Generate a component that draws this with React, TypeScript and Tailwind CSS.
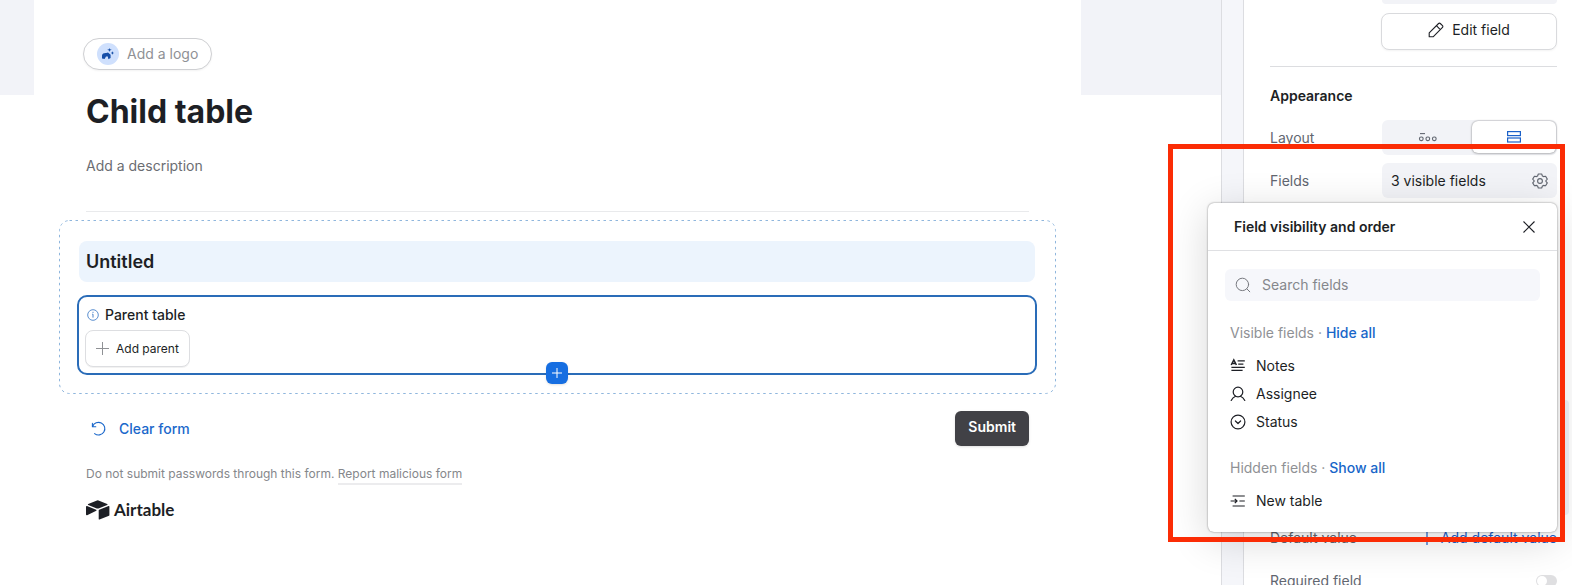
import type { ReactNode } from "react";

const field = { className: "h-4 w-4 shrink-0", viewBox: "0 0 16 16", fill: "none", stroke: "currentColor", strokeWidth: 1.2 };

const NotesIcon = () => (
  <svg {...field}>
    <path d="M1.2 7 3.8 2l2.600 5M2.200 5.600h3.200" strokeWidth="1.500" />
    <path d="M7.600 2.800h7.200M8.200 6.200h5.200M1.400 9.400h13.400M1.400 12.400h11.200" strokeWidth="1.200" />
  </svg>
);

const PersonIcon = () => (
  <svg {...field} strokeLinecap="round">
    <circle cx="8" cy="6" r="4.800" />
    <path d="M1.200 14.400c1-2 2.400-3.400 4.400-4.200M14.800 14.400c-1-2-2.400-3.400-4.400-4.200" />
  </svg>
);

const StatusIcon = () => (
  <svg {...field} strokeLinecap="round" strokeLinejoin="round">
    <circle cx="8" cy="8" r="6.900" />
    <path d="m5.400 7 2.600 2.500L10.600 7" />
  </svg>
);

const LinkIcon = () => (
  <svg {...field}>
    <path d="M2.600 3h12.200M9.400 8h5.400M2.600 13h12.200M.6 8h6.400M4.800 5.800 7 8l-2.200 2.200" />
  </svg>
);

const SearchIcon = () => (
  <svg {...field} strokeWidth={1} strokeLinecap="round">
    <circle cx="7.400" cy="7.400" r="6.200" />
    <path d="m11.800 11.800 3 3" />
  </svg>
);

const GearIcon = () => (
  <svg {...field} strokeWidth={1.1} strokeLinejoin="round">
    <circle cx="8" cy="8" r="2.400" />
    <path d="M6.300 1h3.400l.7 2 1.100.6 2.100-.4 1.700 2.900-1.400 1.600v.6l1.400 1.600-1.700 2.900-2.100-.4-1.100.6-.7 2H6.300l-.7-2-1.100-.6-2.100.4L.7 9.900l1.400-1.600v-.6L.7 6.100l1.700-2.900 2.100.4L5.600 3z" />
  </svg>
);

const PencilIcon = () => (
  <svg {...field} strokeWidth={1.1} strokeLinejoin="round">
    <path d="M1.200 14.800v-3.900l9.400-9.400a1.200 1.200 0 0 1 1.700 0l2.200 2.200a1.200 1.200 0 0 1 0 1.700l-9.400 9.400zM8.400 3.700l3.900 3.900" />
  </svg>
);

const UndoIcon = () => (
  <svg {...field} strokeWidth={1.1} strokeLinecap="round" strokeLinejoin="round">
    <path d="M1.400 2.400v3.400h3.400M1.600 5.600a6.300 6.300 0 1 1 2 7" />
  </svg>
);

const visible = [
  { name: "Notes", icon: <NotesIcon /> },
  { name: "Assignee", icon: <PersonIcon /> },
  { name: "Status", icon: <StatusIcon /> },
];

function FieldItem({ icon, name }: { icon: ReactNode; name: string }) {
  return (
    <li className="flex h-7 items-center gap-[10px]">
      {icon}
      <span>{name}</span>
    </li>
  );
}

function VisibilityPopover() {
  return (
    <div role="dialog" aria-label="Field visibility and order" className="absolute -left-9 right-[15px] top-[203px] z-10 rounded-md bg-white pb-[17px] text-[#1d1f25] shadow-[0_0_2px_rgba(0,0,0,0.5),0_8px_40px_rgba(0,0,0,0.16)]">
      <div className="flex h-12 items-center justify-between border-b border-[#dfe0e3] pl-[26px] pr-[22px]">
        <h3 className="text-sm font-semibold">Field visibility and order</h3>
        <button aria-label="Close">
          <svg className="h-3 w-3" viewBox="0 0 12 12" stroke="currentColor" strokeWidth="1.1"><path d="m.5.5 11 11M11.500.5l-11 11" /></svg>
        </button>
      </div>
      <div className="px-[17px] pt-[18px]">
        <label className="flex h-8 items-center gap-[11px] rounded-md bg-[#f6f7fb] px-[10px] text-[#77797f]">
          <SearchIcon />
          <input type="text" aria-label="Search fields" placeholder="Search fields" className="w-full bg-transparent text-sm outline-none placeholder:text-[#85878c]" />
        </label>
      </div>
      <div className="px-[22px] text-sm">
        <p className="mt-[22px] text-[#8f9195]">Visible fields · <button className="font-medium text-[#1866c9]">Hide all</button></p>
        <ul className="mt-[9px]">{visible.map((f) => <FieldItem key={f.name} {...f} />)}</ul>
        <p className="mt-[22px] text-[#8f9195]">Hidden fields · <button className="font-medium text-[#1866c9]">Show all</button></p>
        <ul className="mt-[9px]"><FieldItem name="New table" icon={<LinkIcon />} /></ul>
      </div>
    </div>
  );
}

function SettingsPanel() {
  return (
    <aside className="relative w-[329px] shrink-0 border-l border-[#dcdde1] bg-white pl-[26px] pr-[15px] text-sm text-[#616670]">
      <div className="ml-28 h-1 rounded-b-md bg-[#f2f3f7]" />
      <button className="ml-auto mt-[9px] flex h-[37px] w-[176px] items-center justify-center gap-2 rounded-lg border border-[#d9dadd] bg-white pb-[3px] text-[#1d1f25] shadow-xs">
        <PencilIcon />
        Edit field
      </button>
      <hr className="mt-4 border-[#dcdde0]" />
      <h2 className="mt-[19px] font-semibold text-[#1d1f25]">Appearance</h2>
      <div className="mt-[14px] flex h-[35px] items-center justify-between">
        <span>Layout</span>
        <div className="flex h-full w-[175px] rounded-md bg-[#f2f3f7] p-px">
          <button aria-label="Pills" className="flex flex-1 items-center justify-center">
            <svg className="h-4 w-5" viewBox="0 0 20 16" fill="none" stroke="#616670" strokeWidth="1.1">
              <path d="M2 3.600h5" /><rect x="1.500" y="7" width="3.600" height="3.600" rx="1.500" /><rect x="8" y="7" width="3.600" height="3.600" rx="1.500" /><rect x="14.500" y="7" width="3.600" height="3.600" rx="1.500" />
            </svg>
          </button>
          <button aria-label="Cards" className="flex h-8 w-[84px] items-center justify-center rounded-md bg-white text-[#1b61c9] shadow-[0_0_2px_rgba(0,0,0,0.4),0_1px_3px_rgba(0,0,0,0.15)]">
            <svg className="h-4 w-4" viewBox="0 0 16 16" fill="none" stroke="currentColor" strokeWidth="1.2"><rect x="1.600" y="2.600" width="12.800" height="4" /><rect x="1.600" y="9" width="12.800" height="4" /></svg>
          </button>
        </div>
      </div>
      <div className="mt-2 flex h-[35px] items-center justify-between">
        <span>Fields</span>
        <button className="flex h-full w-[175px] items-center justify-between rounded-md bg-[#f2f3f7] px-[9px] text-[#1d1f25]">
          3 visible fields
          <span className="text-[#616670]"><GearIcon /></span>
        </button>
      </div>
      <div className="mt-[330px] flex h-5 items-center justify-between">
        <span>Default value</span>
        <button className="flex items-center gap-[6px] text-[#1b61c9]">
          <svg className="h-4 w-4" viewBox="0 0 16 16" stroke="currentColor" strokeWidth="1.2"><path d="M8 1v14M1 8h14" /></svg>
          Add default value
        </button>
      </div>
      <label className="mt-[23px] flex h-5 items-center justify-between">
        Required field
        <input type="checkbox" className="h-3 w-[21px] appearance-none rounded-full bg-[#dfdfe1] before:ml-px before:mt-px before:block before:h-[10px] before:w-[10px] before:rounded-full before:bg-white" />
      </label>
      <div className="absolute right-[3px] top-[400px] h-[115px] w-2 rounded-md bg-[#f0f1f7]" />
      <VisibilityPopover />
      <div className="pointer-events-none absolute -left-[76px] right-[7px] top-[144px] z-20 h-[398px] border-5 border-[#fb2c05]" />
    </aside>
  );
}

function FormPreview() {
  return (
    <main className="flex min-w-0 flex-1 items-start">
      <div className="h-[95px] w-[34px] shrink-0 bg-[#f2f3f8]" />
      <div className="min-w-0 flex-1 px-[25px] pt-[38px]">
        <div className="px-[27px]">
          <button className="-ml-[3px] flex h-8 items-center gap-2 rounded-full border border-[#cfd0d3] bg-white px-[13px] text-sm text-[#8f9195] shadow-xs">
            <span className="flex h-[22px] w-[22px] items-center justify-center rounded-full bg-[#cfe0fd] text-[#174fa8]">
              <svg className="h-3 w-3" viewBox="0 0 12 12" fill="currentColor">
                <path d="M0 7.400C.4 5.600 2 4.800 4.200 5L6 4.600l2.600 2.200v3.100L6.400 11.200 5.800 8.600 4 8.400 2.600 11 0 10.400zM5.200 1.800 7 1.300 7.500 0 8 1.300l1.700.5L8 2.400l-.5 1.500L7 2.400zM8.600 5l1.300-.4.600-1.300.5 1.300L12 5l-1 .5-.5 1.300-.6-1.300z" />
              </svg>
            </span>
            Add a logo
          </button>
          <h1 className="mt-5 text-[32px] font-bold leading-[44px] text-[#1d1f25]">Child table</h1>
          <p className="mt-[22px] text-sm text-[#6b6d72]">Add a description</p>
          <hr className="mt-[35px] border-[#e9eaec]" />
        </div>

        <section className="relative mr-px mt-2 px-5 pb-[18px] pt-[21px]">
          <svg className="pointer-events-none absolute inset-0 h-full w-full overflow-visible" fill="none">
            <rect x=".5" y=".5" width="100%" height="100%" rx="10" stroke="#8fb6dd" strokeDasharray="2.500 3.500" />
          </svg>
          <h2 className="rounded-lg bg-[#ecf4fd] px-[7px] py-[6px] text-lg font-semibold leading-[29px] text-[#1d1f25]">Untitled</h2>
          <div className="relative -mx-0.5 mt-[13px] rounded-[10px] border-2 border-[#2a6cb8] px-[6px] pb-[6px] pt-2">
            <p className="flex items-center gap-[6px] px-0.5 text-sm font-medium text-[#1d1f25]">
              <svg className="h-3 w-3" viewBox="0 0 12 12" fill="none" stroke="#4a83c9"><circle cx="6" cy="6" r="5.300" strokeWidth=".9" /><path d="M5.200 5.200H6V8.600M6 2.800v1.100" /></svg>
              Parent table
            </p>
            <button className="mt-[5px] flex h-[37px] items-center gap-[7px] rounded-lg border border-[#dddee1] bg-white px-[10px] text-xs text-[#1d1f25] shadow-2xs">
              <svg className="h-[13px] w-[13px]" viewBox="0 0 13 13" stroke="#8f9195"><path d="M6.500 0v13M0 6.500h13" /></svg>
              Add parent
            </button>
            <button aria-label="Add element" className="absolute -bottom-[11px] left-1/2 flex h-[22px] w-[22px] -translate-x-1/2 items-center justify-center rounded-md bg-[#166ee1] text-white shadow-sm">
              <svg className="h-[10px] w-[10px]" viewBox="0 0 10 10" stroke="currentColor"><path d="M5 0v10M0 5h10" /></svg>
            </button>
          </div>
        </section>

        <div className="mt-[18px] px-[27px]">
          <div className="flex items-center justify-between">
            <button className="flex items-center gap-3 px-[5px] text-sm font-medium text-[#1b68cb]">
              <UndoIcon />
              Clear form
            </button>
            <button className="h-[35px] rounded-md bg-[#414146] px-[13px] pb-1 text-sm font-semibold text-white shadow-sm">Submit</button>
          </div>
          <p className="mt-5 text-xs text-[#85878b]">
            Do not submit passwords through this form. <a href="#report" className="inline-block border-b-2 border-[#ececee] pb-px">Report malicious form</a>
          </p>
          <div className="mt-[15px] flex items-center gap-1 text-[#1d1f25]">
            <svg className="h-5 w-6" viewBox="0 0 24 20" fill="currentColor">
              <path d="M11 .5a2 2 0 0 1 1.500 0l8.700 3.500c.5.200.5.800 0 1l-8.700 3.400a2.600 2.600 0 0 1-1.700 0L2.200 5c-.5-.200-.5-.8 0-1z" />
              <path d="M12.700 10.300v8.600c0 .4.400.7.800.5l9.500-3.700a.6.6 0 0 0 .4-.5V6.600c0-.4-.4-.7-.8-.5l-9.500 3.700a.6.6 0 0 0-.4.5z" />
              <path d="m10.300 10.700-9.200 4.500c-.5.200-1.100-.1-1.100-.600V6.800c0-.5.500-.9 1-.7l9.200 3.700c.4.100.5.700.1.900z" />
            </svg>
            <span className="font-[Lato] text-[17px] font-bold leading-5">Airtable</span>
          </div>
        </div>
      </div>
      <div className="h-[95px] w-[140px] shrink-0 bg-[#f2f3f8]" />
    </main>
  );
}

export default function App() {
  return (
    <div className="flex h-screen overflow-hidden bg-white font-[Inter,sans-serif]">
      <FormPreview />
      <div className="w-[22px] shrink-0 border-l border-[#dcdde1] bg-[#f5f6fa]" />
      <SettingsPanel />
    </div>
  );
}
